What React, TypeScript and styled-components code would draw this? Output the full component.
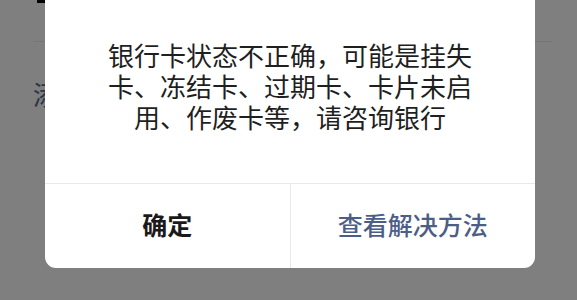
import styled, { createGlobalStyle } from "styled-components";

const GlobalStyle = createGlobalStyle`
    html, body {
        margin: 0;
        padding: 0;
        width: 100%;
        height: 100%;
        overflow: hidden;
        background: #ffffff;
        font-family: "Noto Sans CJK SC", "Noto Sans", sans-serif;
    }
`;

const Page = styled.div`
    position: relative;
    width: 577px;
    height: 300px;
    padding-left: 33px;
    box-sizing: border-box;
`;

const Header = styled.div`
    height: 42px;
    margin-right: 25px;
    border-bottom: 1px solid #ececec;
    box-sizing: border-box;
    padding-left: 4px;
`;

const HeaderMark = styled.div`
    width: 10px;
    height: 3px;
    background: #000000;
`;

const Row = styled.div`
    padding-top: 36px;
    font-size: 26px;
    line-height: 31px;
    color: #576b95;
`;

const Mask = styled.div`
    position: absolute;
    inset: 0;
    background: rgba(0, 0, 0, 0.5);
`;

const Dialog = styled.div`
    position: absolute;
    left: 45px;
    bottom: 32px;
    width: 490px;
    background: #ffffff;
    border-radius: 11px;
    overflow: hidden;
    display: flex;
    flex-direction: column;
`;

const Message = styled.div`
    padding: 60px 58px 51px;
    font-size: 26px;
    line-height: 31px;
    color: #1f1f1f;
    text-align: center;
    border-bottom: 1px solid #e9e9e9;
`;

const Actions = styled.div`
    display: flex;
    height: 84px;
`;

const Action = styled.div<{ $primary?: boolean }>`
    flex: 1;
    display: flex;
    align-items: center;
    justify-content: center;
    padding-bottom: 5px;
    font-size: 25px;
    font-weight: ${(p) => (p.$primary ? 500 : 700)};
    color: ${(p) => (p.$primary ? "#4c5e87" : "#1a1a1a")};

    & + & {
        border-left: 1px solid #e9e9e9;
    }
`;

export default function App() {
    return (
        <>
            <GlobalStyle />
            <Page>
                <Header>
                    <HeaderMark />
                </Header>
                <Row>添加银行卡</Row>
                <Mask />
                <Dialog>
                    <Message>
                        银行卡状态不正确，可能是挂失卡、冻结卡、过期卡、卡片未启用、作废卡等，请咨询银行
                    </Message>
                    <Actions>
                        <Action>确定</Action>
                        <Action $primary>查看解决方法</Action>
                    </Actions>
                </Dialog>
            </Page>
        </>
    );
}
